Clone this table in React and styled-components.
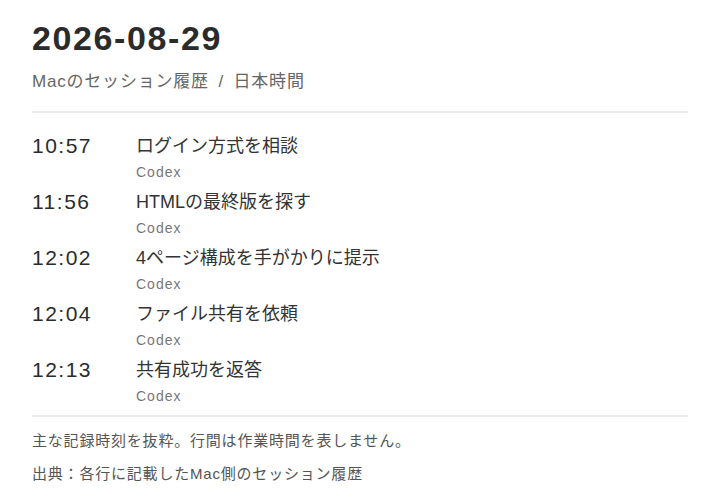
import React from 'react';
import styled, { createGlobalStyle } from 'styled-components';

const rows = [
  { time: '10:57', title: 'ログイン方式を相談', source: 'Codex' },
  { time: '11:56', title: 'HTMLの最終版を探す', source: 'Codex' },
  { time: '12:02', title: '4ページ構成を手がかりに提示', source: 'Codex' },
  { time: '12:04', title: 'ファイル共有を依頼', source: 'Codex' },
  { time: '12:13', title: '共有成功を返答', source: 'Codex' },
];

const App = () => {
  return (
    <Page>
      <GlobalStyle />
      <Header>
        <Title>2026-08-29</Title>
        <Subtitle>Macのセッション履歴 / 日本時間</Subtitle>
      </Header>
      <List>
        {rows.map((r) => (
          <Row key={r.time}>
            <Time>{r.time}</Time>
            <Body>
              <Event>{r.title}</Event>
              <Source>{r.source}</Source>
            </Body>
          </Row>
        ))}
      </List>
      <Notes>
        <Note>主な記録時刻を抜粋。行間は作業時間を表しません。</Note>
        <Note>出典：各行に記載したMac側のセッション履歴</Note>
      </Notes>
    </Page>
  );
};

export default App;

const GlobalStyle = createGlobalStyle`
  body {
    margin: 0;
    background: #fff;
    font-family: "Liberation Sans", "Noto Sans CJK JP", sans-serif;
  }
`;

const Page = styled.div`
  padding: 18px 32px 0;
  width: 656px;
`;

const Header = styled.div`
  padding-bottom: 17px;
  border-bottom: 2px solid #ececec;
`;

const Title = styled.h1`
  margin: 0;
  font-size: 34px;
  font-weight: 700;
  letter-spacing: 1.6px;
  color: #2b2b2b;
  line-height: 40px;
`;

const Subtitle = styled.div`
  margin-top: 12px;
  font-size: 17px;
  letter-spacing: 0.8px;
  word-spacing: 4px;
  color: #666;
  line-height: 24px;
`;

const List = styled.div`
  padding: 19px 0 3px;
  border-bottom: 2px solid #ececec;
`;

const Row = styled.div`
  display: flex;
  height: 56px;
`;

const Time = styled.div`
  width: 104px;
  font-size: 21px;
  letter-spacing: 1.5px;
  color: #2b2b2b;
  line-height: 28px;
`;

const Body = styled.div`
  display: flex;
  flex-direction: column;
`;

const Event = styled.div`
  font-size: 18px;
  color: #333;
  line-height: 28px;
`;

const Source = styled.div`
  margin-top: 2px;
  font-size: 14px;
  letter-spacing: 1px;
  color: #777;
  line-height: 20px;
`;

const Notes = styled.div`
  padding-top: 7px;
`;

const Note = styled.div`
  font-size: 15px;
  letter-spacing: 0.8px;
  color: #555;
  line-height: 33px;
`;
